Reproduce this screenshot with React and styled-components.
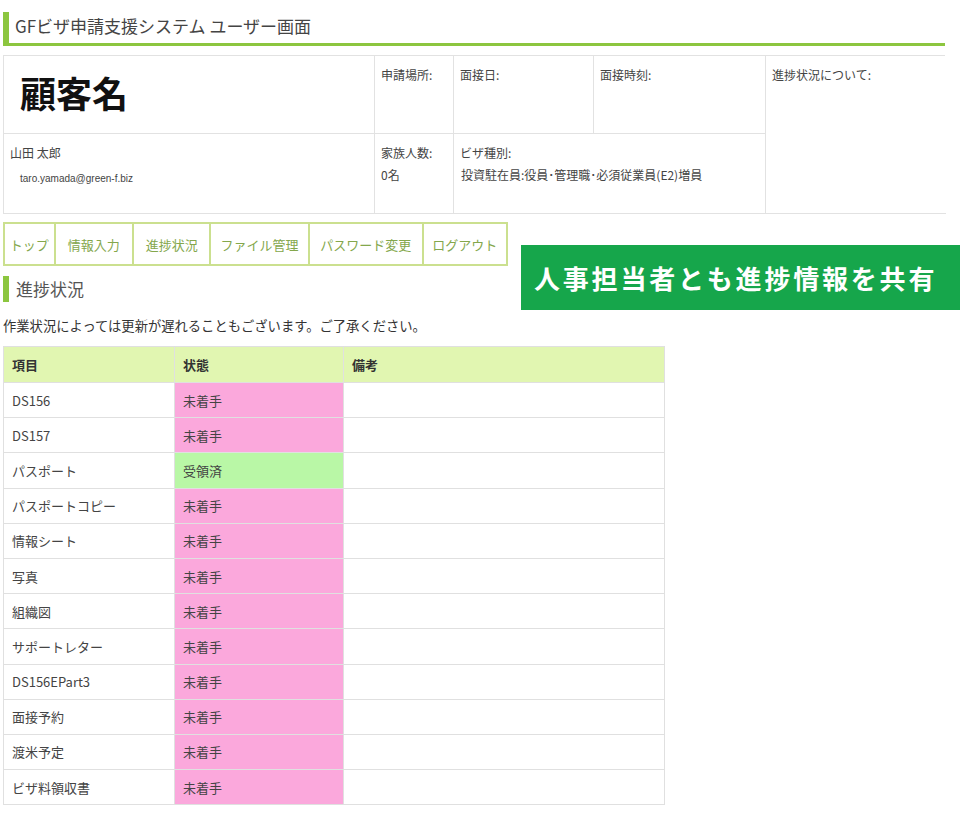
import React from 'react';
import styled, { createGlobalStyle } from 'styled-components';

const GlobalStyle = createGlobalStyle`
  body {
    margin: 0;
    background: #fff;
    font-family: "Noto Sans CJK JP", "Liberation Sans", sans-serif;
    color: #333;
  }
`;

const Page = styled.div`
  width: 960px;
  padding: 12px 0 0 3px;
  box-sizing: border-box;
`;

const Title = styled.h1`
  width: 942px;
  box-sizing: border-box;
  margin: 0;
  height: 34px;
  border-left: 6px solid #8cc63f;
  border-bottom: 3px solid #8cc63f;
  padding: 2px 0 0 6px;
  font-size: 17px;
  font-weight: normal;
  color: #444;
  line-height: 24px;
`;

const InfoGrid = styled.div`
  margin-top: 9px;
  width: 942px;
  display: grid;
  grid-template-columns: 371px 79px 140px 172px 180px;
  grid-template-rows: 78px 80px;
  border-top: 1px solid #e2e2e2;
  border-left: 1px solid #e2e2e2;
  box-sizing: border-box;
`;

const Cell = styled.div`
  border-right: ${p => (p.$noRight ? 'none' : '1px solid #e2e2e2')};
  border-bottom: 1px solid #e2e2e2;
  padding: 8px 6px;
  font-size: 12px;
  line-height: 22px;
  color: #444;
  grid-column: ${p => p.$col || 'auto'};
  grid-row: ${p => p.$row || 'auto'};
`;

const CustomerName = styled.div`
  font-size: 36px;
  font-weight: bold;
  color: #111;
  line-height: 44px;
  padding: 6px 0 0 10px;
`;

const Email = styled.div`
  font-size: 10px;
  padding-left: 10px;
  margin-top: 4px;
  font-family: "Liberation Sans", sans-serif;
`;

const Indented = styled.div`
  padding-left: ${p => p.$indent || 0}px;
`;

const MidRow = styled.div`
  display: flex;
  align-items: flex-start;
  margin-top: 8px;
`;

const LeftCol = styled.div`
  width: 505px;
`;

const Nav = styled.ul`
  list-style: none;
  display: flex;
  margin: 0;
  padding: 0;
  width: 505px;
  height: 44px;
  border: 2px solid #cbe08f;
  box-sizing: border-box;
`;

const NavItem = styled.li`
  width: ${p => p.$w}px;
  display: flex;
  align-items: center;
  justify-content: center;
  font-size: 13px;
  color: #84a74c;
  border-right: ${p => (p.$last ? 'none' : '2px solid #cbe08f')};
  box-sizing: border-box;
`;

const SectionHeading = styled.h2`
  margin: 10px 0 0;
  height: 26px;
  border-left: 6px solid #8cc63f;
  padding-left: 7px;
  font-size: 17px;
  font-weight: normal;
  color: #555;
  line-height: 26px;
`;

const Banner = styled.div`
  margin: 23px 0 0 13px;
  width: 439px;
  height: 65px;
  background: #16a64b;
  color: #fff;
  font-size: 26px;
  font-weight: bold;
  letter-spacing: 2.8px;
  display: flex;
  align-items: center;
  padding-left: 13px;
  box-sizing: border-box;
`;

const Note = styled.p`
  margin: 6px 0 0;
  font-size: 13.3px;
  color: #333;
  line-height: 20px;
`;

const Table = styled.table`
  margin-top: 10px;
  width: 662px;
  border-collapse: collapse;
  table-layout: fixed;
  border: 1px solid #e0e0e0;
`;

const Th = styled.th`
  background: #e1f6b1;
  text-align: left;
  font-size: 13px;
  font-weight: bold;
  height: 35px;
  padding: 0 8px;
  border: 1px solid #e0e0e0;
  color: #333;
`;

const Td = styled.td`
  height: 34.2px;
  padding: 0 8px;
  font-size: 13px;
  color: #444;
  border: 1px solid #e0e0e0;
  background: ${p => p.$bg || '#fff'};
`;

const rows = [
  ['DS156', '未着手'],
  ['DS157', '未着手'],
  ['パスポート', '受領済'],
  ['パスポートコピー', '未着手'],
  ['情報シート', '未着手'],
  ['写真', '未着手'],
  ['組織図', '未着手'],
  ['サポートレター', '未着手'],
  ['DS156EPart3', '未着手'],
  ['面接予約', '未着手'],
  ['渡米予定', '未着手'],
  ['ビザ料領収書', '未着手'],
];

const navItems = [
  ['トップ', 51],
  ['情報入力', 79],
  ['進捗状況', 78],
  ['ファイル管理', 99],
  ['パスワード変更', 115],
  ['ログアウト', 83],
];

export default function App() {
  return (
    <Page>
      <GlobalStyle />
      <Title>GFビザ申請支援システム ユーザー画面</Title>

      <InfoGrid>
        <Cell $col="1" $row="1">
          <CustomerName>顧客名</CustomerName>
        </Cell>
        <Cell>申請場所:</Cell>
        <Cell>面接日:</Cell>
        <Cell>面接時刻:</Cell>
        <Cell $col="5" $row="1 / span 2" $noRight>進捗状況について:</Cell>
        <Cell $col="1" $row="2">
          <Indented>山田 太郎</Indented>
          <Email>taro.yamada@green-f.biz</Email>
        </Cell>
        <Cell $col="2" $row="2">
          家族人数:
          <div>0名</div>
        </Cell>
        <Cell $col="3 / span 2" $row="2">
          ビザ種別:
          <Indented $indent={1}>投資駐在員:役員･管理職･必須従業員(E2)増員</Indented>
        </Cell>
      </InfoGrid>

      <MidRow>
        <LeftCol>
          <Nav>
            {navItems.map(([label, w], i) => (
              <NavItem key={label} $w={w} $last={i === navItems.length - 1}>
                {label}
              </NavItem>
            ))}
          </Nav>
          <SectionHeading>進捗状況</SectionHeading>
        </LeftCol>
        <Banner>人事担当者とも進捗情報を共有</Banner>
      </MidRow>

      <Note>作業状況によっては更新が遅れることもございます。ご了承ください。</Note>

      <Table>
        <colgroup>
          <col style={{ width: 171 }} />
          <col style={{ width: 169 }} />
          <col />
        </colgroup>
        <thead>
          <tr>
            <Th>項目</Th>
            <Th>状態</Th>
            <Th>備考</Th>
          </tr>
        </thead>
        <tbody>
          {rows.map(([item, status]) => (
            <tr key={item}>
              <Td>{item}</Td>
              <Td $bg={status === '受領済' ? '#b9f7a6' : '#fba8dc'}>{status}</Td>
              <Td />
            </tr>
          ))}
        </tbody>
      </Table>
    </Page>
  );
}
